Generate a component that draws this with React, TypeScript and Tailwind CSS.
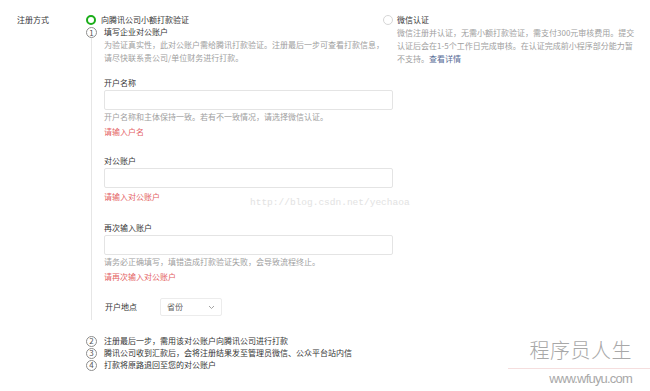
import { ReactNode } from 'react';

const font = { fontFamily: '"Noto Sans CJK SC", "Noto Sans", sans-serif' };

function StepNum({ n }: { n: number }) {
    return (
        <span className="flex h-[11px] w-[11px] shrink-0 items-center justify-center rounded-full border border-[#8d8d8d] text-[8px] leading-none text-[#555]">
            {n}
        </span>
    );
}

function Field({
    label,
    hint,
    error,
    className = '',
}: {
    label: string;
    hint?: string;
    error: string;
    className?: string;
}) {
    return (
        <div className={className}>
            <div className="leading-[13px] text-[#353535]">{label}</div>
            <div className="mt-px h-[20px] w-[289px] rounded-[2px] border border-[#e4e4e4] bg-white" />
            {hint && <div className="leading-[13px] text-[#a0a0a0]">{hint}</div>}
            <div className={`${hint ? 'mt-[2px]' : 'mt-[2px]'} leading-[13px] text-[#e46264]`}>{error}</div>
        </div>
    );
}

function SimpleStep({ n, children }: { n: number; children: ReactNode }) {
    return (
        <div className="flex h-[12px] items-center">
            <StepNum n={n} />
            <span className="ml-[7px] whitespace-nowrap text-[#353535]">{children}</span>
        </div>
    );
}

export default function App() {
    return (
        <div
            className="relative h-[391px] w-[650px] overflow-hidden bg-white text-[8px]"
            style={font}
        >
            <div className="flex pt-[13px]">
                <div className="w-[86px] shrink-0 pl-[17px] leading-[13px] text-[#353535]">注册方式</div>

                {/* 向腾讯公司小额打款验证 */}
                <div className="w-[297px] shrink-0">
                    <div className="flex h-[13px] items-center">
                        <span className="h-[10px] w-[10px] rounded-full border-[2.5px] border-[#1aad19]" />
                        <span className="ml-[5px] text-[#353535]">向腾讯公司小额打款验证</span>
                    </div>

                    <div className="flex">
                        <div className="flex w-[11px] shrink-0 flex-col items-center pt-[1px]">
                            <StepNum n={1} />
                            <div className="w-px flex-1 bg-[#e6e6e6]" />
                        </div>
                        <div className="ml-[7px] pb-[4px]">
                            <div className="leading-[12px] text-[#353535]">填写企业对公账户</div>
                            <div className="whitespace-nowrap leading-[13px] text-[#a0a0a0]">
                                为验证真实性，此对公账户需给腾讯打款验证。注册最后一步可查看打款信息，
                                <br />
                                请尽快联系贵公司/单位财务进行打款。
                            </div>

                            <Field
                                className="mt-[12px]"
                                label="开户名称"
                                hint="开户名称和主体保持一致。若有不一致情况，请选择微信认证。"
                                error="请输入户名"
                            />
                            <Field className="mt-[16px]" label="对公账户" error="请输入对公账户" />
                            <Field
                                className="mt-[18px]"
                                label="再次输入账户"
                                hint="请务必正确填写，填错造成打款验证失败，会导致流程终止。"
                                error="请再次输入对公账户"
                            />

                            <div className="mt-[15px] flex items-center">
                                <span className="ml-[1px] w-[55px] text-[#353535]">开户地点</span>
                                <div className="flex h-[18px] w-[62px] items-center justify-between rounded-[2px] border border-[#ececec] px-[6px] text-[#666]">
                                    <span>省份</span>
                                    <svg width="7" height="5" viewBox="0 0 7 5" fill="none">
                                        <path d="M1 1l2.5 2.5L6 1" stroke="#9a9a9a" strokeWidth="0.9" />
                                    </svg>
                                </div>
                            </div>
                        </div>
                    </div>

                    <div className="mt-[15px] flex flex-col">
                        <SimpleStep n={2}>注册最后一步，需用该对公账户向腾讯公司进行打款</SimpleStep>
                        <SimpleStep n={3}>腾讯公司收到汇款后，会将注册结果发至管理员微信、公众平台站内信</SimpleStep>
                        <SimpleStep n={4}>打款将原路退回至您的对公账户</SimpleStep>
                    </div>
                </div>

                {/* 微信认证 */}
                <div className="flex-1">
                    <div className="flex h-[13px] items-center">
                        <span className="h-[10px] w-[10px] rounded-full border border-[#d6d6d6]" />
                        <span className="ml-[4px] text-[#353535]">微信认证</span>
                    </div>
                    <div className="ml-[14px] whitespace-nowrap leading-[13px] text-[#a0a0a0]">
                        微信注册并认证，无需小额打款验证，需支付300元审核费用。提交
                        <br />
                        认证后会在1-5个工作日完成审核。在认证完成前小程序部分能力暂
                        <br />
                        不支持。<span className="text-[#576b95]">查看详情</span>
                    </div>
                </div>
            </div>

            {/* watermarks */}
            <div
                className="absolute left-[250px] top-[196px] whitespace-nowrap text-[9.5px] text-[#e2e2e2]"
                style={{ fontFamily: '"Liberation Mono", monospace' }}
            >
                http://blog.csdn.net/yechaoa
            </div>
            <div className="absolute left-[508px] top-[338px] flex w-[142px] flex-col items-end pr-[18px]">
                <div className="text-[20px] font-light leading-[24px] tracking-[0.5px] text-[#a8a8a8]">程序员人生</div>
                <div className="mt-[6px] h-px w-[142px] -mr-[18px] bg-[#f5dede]" />
                <div
                    className="mt-[3px] text-[13px] leading-[14px] tracking-[-0.8px] text-[#a8a8a8]"
                    style={{ fontFamily: '"Liberation Sans", sans-serif' }}
                >
                    www.wfuyu.com
                </div>
            </div>
        </div>
    );
}
